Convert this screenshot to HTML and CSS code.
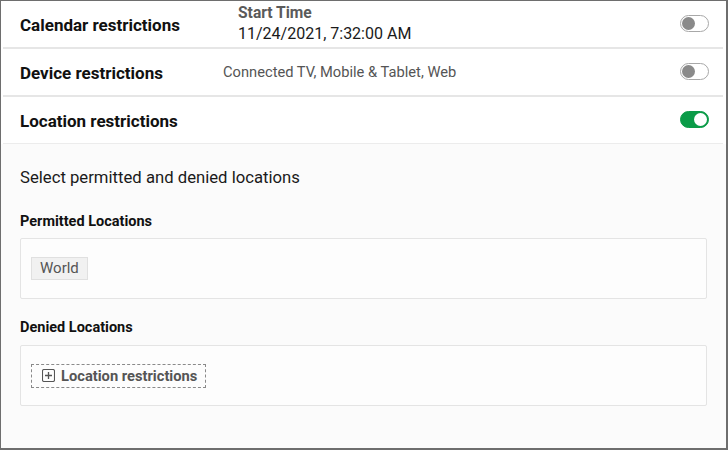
FILE: index.html
```html
<!DOCTYPE html>
<html>
<head>
<meta charset="utf-8">
<link rel="stylesheet" href="styles.css">
</head>
<body>
<div class="frame">
  <div class="rows">
    <div class="row">
      <div class="label">Calendar restrictions</div>
      <div class="value value-time">
        <div class="value-title">Start Time</div>
        <div class="value-main">11/24/2021, 7:32:00 AM</div>
      </div>
      <span class="toggle"><span class="knob"></span></span>
    </div>
    <div class="row">
      <div class="label">Device restrictions</div>
      <div class="value value-device">Connected TV, Mobile &amp; Tablet, Web</div>
      <span class="toggle"><span class="knob"></span></span>
    </div>
    <div class="row row-last">
      <div class="label">Location restrictions</div>
      <span class="toggle toggle-on"><span class="knob"></span></span>
    </div>
  </div>
  <div class="section">
    <p class="intro">Select permitted and denied locations</p>
    <h3 class="group-title">Permitted Locations</h3>
    <div class="box">
      <span class="chip">World</span>
    </div>
    <h3 class="group-title group-title-second">Denied Locations</h3>
    <div class="box box-second">
      <span class="add-btn">
        <svg class="add-icon" width="13" height="13" viewBox="0 0 13 13">
          <rect x="0.5" y="0.5" width="12" height="12" rx="1.5" fill="none" stroke="#555" stroke-width="1.1"/>
          <path d="M6.5 3v7M3 6.5h7" stroke="#555" stroke-width="1.3" fill="none"/>
        </svg>
        Location restrictions
      </span>
    </div>
  </div>
</div>
</body>
</html>
```

FILE: styles.css
```css
* { box-sizing: border-box; }
html, body { margin: 0; padding: 0; background: #fff; }
body {
  font-family: Roboto, "Liberation Sans", Arial, sans-serif;
  color: #1a1a1a;
}
.frame {
  width: 728px;
  height: 450px;
  border-style: solid;
  border-color: #6e6e6e;
  border-width: 1px 2px 2px 1px;
  background: #fbfbfb;
  display: flex;
  flex-direction: column;
  overflow: hidden;
}
.rows {
  background: #fff;
  padding: 0 3px 0 2px;
}
.row {
  display: flex;
  align-items: center;
  height: 48px;
  padding: 0 15px 0 17px;
  border-bottom: 2px solid #e6e6e6;
}
.row-last {
  height: 47px;
  border-bottom: 1px solid #ececec;
}
.label {
  font-weight: 700;
  font-size: 17px;
  color: #111;
  width: 201px;
  flex: none;
  margin-top: 2px;
}
.value { flex: 1; }
.value-time {
  padding-left: 17px;
}
.value-title {
  font-weight: 700;
  font-size: 15.6px;
  color: #5a5a5a;
  line-height: 19px;
}
.value-main {
  font-size: 16px;
  color: #1a1a1a;
  line-height: 21px;
}
.value-device {
  padding-left: 2px;
  font-size: 14.7px;
  color: #555;
}
.row-last .label { flex: 1; }
.toggle {
  flex: none;
  width: 29px;
  height: 17px;
  margin-top: -2px;
  margin-right: -1px;
  border-radius: 9px;
  border: 1px solid #a8a8a8;
  background: #fff;
  display: flex;
  align-items: center;
  padding: 0 1px;
}
.knob {
  width: 13px;
  height: 13px;
  border-radius: 50%;
  background: #8a8a8a;
}
.toggle-on {
  background: #0b9b48;
  border-color: #0b9b48;
  justify-content: flex-end;
}
.toggle-on .knob {
  background: #fff;
}
.section {
  flex: 1;
  padding: 22px 19px 0 19px;
}
.intro {
  margin: 0;
  font-size: 16.7px;
  line-height: 24px;
  color: #1a1a1a;
}
.group-title {
  margin: 23px 0 0;
  font-size: 14.5px;
  line-height: 18px;
  font-weight: 700;
  color: #111;
}
.group-title-second { margin-top: 20px; }
.box {
  margin-top: 7px;
  height: 61px;
  background: #fdfdfd;
  border: 1px solid #e4e4e4;
  border-radius: 2px;
  padding: 0 10px;
  display: flex;
  align-items: center;
}
.box-second { margin-top: 8px; }
.chip {
  background: #f1f1f1;
  border: 1px solid #e0e0e0;
  color: #555;
  font-size: 15px;
  line-height: 21px;
  padding: 0 8px;
}
.add-btn {
  display: inline-flex;
  align-items: center;
  gap: 6px;
  border: 1px dashed #8a8a8a;
  height: 24px;
  padding: 0 8px 0 10px;
  font-weight: 700;
  font-size: 14.7px;
  color: #555;
}
.add-icon { flex: none; margin-top: -1px; }
```
